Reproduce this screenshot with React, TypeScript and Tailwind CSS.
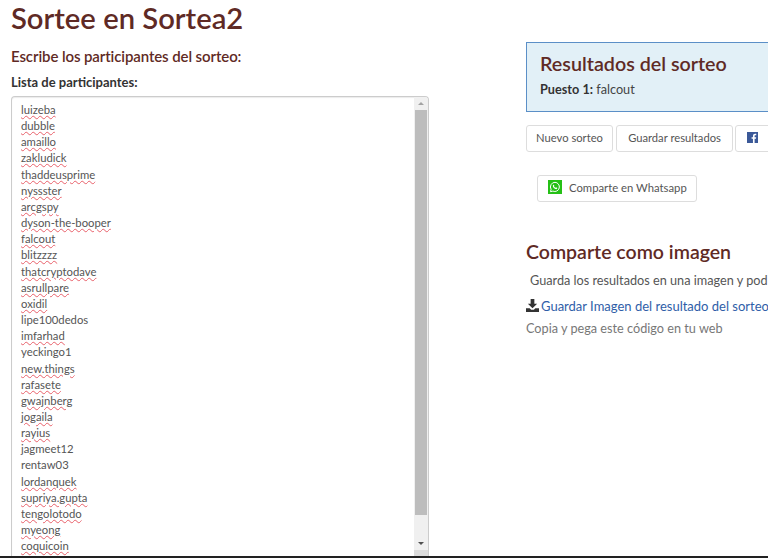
const names: [string, boolean][] = [
  ['luizeba', true],
  ['dubble', true],
  ['amaillo', true],
  ['zakludick', true],
  ['thaddeusprime', true],
  ['nyssster', true],
  ['arcgspy', true],
  ['dyson-the-booper', true],
  ['falcout', true],
  ['blitzzzz', true],
  ['thatcryptodave', true],
  ['asrullpare', true],
  ['oxidil', true],
  ['lipe100dedos', false],
  ['imfarhad', true],
  ['yeckingo1', false],
  ['new.things', true],
  ['rafasete', true],
  ['gwajnberg', true],
  ['jogaila', true],
  ['rayius', true],
  ['jagmeet12', false],
  ['rentaw03', false],
  ['lordanquek', true],
  ['supriya.gupta', true],
  ['tengolotodo', true],
  ['myeong', true],
  ['coquicoin', true],
]

function Scrollbar() {
  return (
    <div className="absolute top-0 right-0 bottom-0 w-[14px] bg-[#f0f0f0] flex flex-col items-center">
      <div className="h-[13px] w-full flex items-center justify-center">
        <div className="w-0 h-0 border-x-[3px] border-x-transparent border-b-[3px] border-b-[#a3a3a3]" />
      </div>
      <div className="h-[405px] w-[12px] bg-[#bdbdbd]" />
      <div className="h-[22px]" />
      <div className="h-[13px] w-full flex items-center justify-center">
        <div className="w-0 h-0 border-x-[3px] border-x-transparent border-t-[3px] border-t-[#505050]" />
      </div>
      <div className="flex-1 w-full bg-[#dcdcdc]" />
    </div>
  )
}

export default function App() {
  return (
    <div className="h-[558px] w-[768px] overflow-hidden bg-white flex flex-col font-['Lato','Liberation_Sans',sans-serif] text-[#555]">
      <div className="flex-1 min-h-0 flex">
        {/* Left column */}
        <div className="w-[418px] ml-[11px] shrink-0 flex flex-col min-h-0">
          <h1 className="text-[29.2px] leading-[36px] font-semibold text-[#5f2a25]">Sortee en Sortea2</h1>
          <h2 className="text-[15px] leading-[18px] font-semibold tracking-[-0.1px] text-[#5f2a25] mt-[11px]">Escribe los participantes del sorteo:</h2>
          <label className="text-[13px] leading-[16px] font-bold text-[#333] mt-[9px]">Lista de participantes:</label>
          <div className="relative flex-1 min-h-0 mt-[6px] border border-[#ccc] border-b-0 rounded-t-[4px] overflow-hidden pl-[9px] pt-[5px] shadow-[inset_0_1px_1px_rgba(0,0,0,0.08)]">
            {names.map(([name, misspelled]) => (
              <div key={name} className="text-[11.3px] leading-[16.15px]">
                <span className={misspelled ? 'underline decoration-wavy decoration-[#e8606a] decoration-1 underline-offset-[0.5px]' : ''}>{name}</span>
              </div>
            ))}
            <Scrollbar />
          </div>
        </div>

        {/* Right column */}
        <div className="ml-[97px] w-[400px] shrink-0 pt-[42px]">
          <div className="h-[70px] w-[400px] bg-[#e2f0f7] border border-[#5b8fc7] pl-[13px] pt-[7px]">
            <h3 className="text-[19.7px] leading-[28px] font-semibold text-[#5f2a25]">Resultados del sorteo</h3>
            <p className="text-[12.7px] leading-[18px] text-[#444] mt-[2px]"><b className="font-bold text-[#333]">Puesto 1:</b> falcout</p>
          </div>
          <div className="flex gap-[3px] mt-[13px]">
            <button className="h-[27px] w-[87px] border border-[#ddd] rounded-[3px] text-[11.2px] text-[#555] whitespace-nowrap">Nuevo sorteo</button>
            <button className="h-[27px] w-[117px] border border-[#ddd] rounded-[3px] text-[11.2px] text-[#555] whitespace-nowrap">Guardar resultados</button>
            <button aria-label="Facebook" className="h-[27px] w-[60px] pl-[11px] ml-[-1px] border border-[#ddd] rounded-[3px] flex items-center">
              <svg viewBox="0 0 12 12" className="w-[11px] h-[11px] -mt-[2px]">
                <rect width="12" height="12" fill="#3b5998" />
                <path d="M8.3 12V7.4h1.5l.2-1.8H8.3V4.5c0-.5.2-.9.9-.9h.9V2c-.2 0-.7-.1-1.3-.1-1.4 0-2.3.8-2.3 2.4v1.3H5v1.8h1.5V12z" fill="#fff" />
              </svg>
            </button>
          </div>
          <button className="h-[27px] w-[160px] ml-[11px] mt-[23px] pl-[10px] border border-[#ddd] rounded-[3px] text-[11.3px] text-[#555] whitespace-nowrap flex items-center gap-[7px]">
            <svg viewBox="0 0 14 14" className="w-[14px] h-[14px] -mt-[3px]">
              <rect width="14" height="14" fill="#25c016" />
              <path d="M7 2.3a4.6 4.6 0 0 0-3.9 7L2.5 11.7l2.4-.6A4.6 4.6 0 1 0 7 2.3z" fill="none" stroke="#fff" strokeWidth="1" />
              <path d="M5.4 4.8c.4-.3.6 0 .8.5.2.5.1.6-.2 1 .3.7.9 1.2 1.6 1.5.4-.4.5-.5 1-.2.6.3.8.4.6.8-.3.7-1 .9-1.8.6C6.200 8.600 5.300 7.700 4.900 6.500c-.2-.7 0-1.300.5-1.700z" fill="#fff" />
            </svg>
            Comparte en Whatsapp
          </button>
          <h3 className="text-[19.5px] leading-[24px] font-semibold text-[#5f2a25] mt-[38px]">Comparte como imagen</h3>
          <p className="text-[12.7px] leading-[18px] text-[#555] mt-[7px] ml-[4px] whitespace-nowrap">Guarda los resultados en una imagen y podrás compartirlos</p>
          <a className="flex items-center text-[13px] leading-[18px] text-[#2f5ea8] mt-[8px] whitespace-nowrap">
            <svg viewBox="0 0 14 14" className="w-[13px] h-[13px] mr-[2px] -mt-[2px]" fill="#333">
              <path d="M5 0h4v5h3L7 10 2 5h3z" />
              <path d="M0 10h4l1.500 1.500h3L10 10h4v4H0z" />
            </svg>
            Guardar Imagen del resultado del sorteo
          </a>
          <p className="text-[12.7px] leading-[18px] text-[#777] mt-[4px]">Copia y pega este código en tu web</p>
        </div>
      </div>
      <div className="h-[2px] bg-[#222] shrink-0" />
    </div>
  )
}
